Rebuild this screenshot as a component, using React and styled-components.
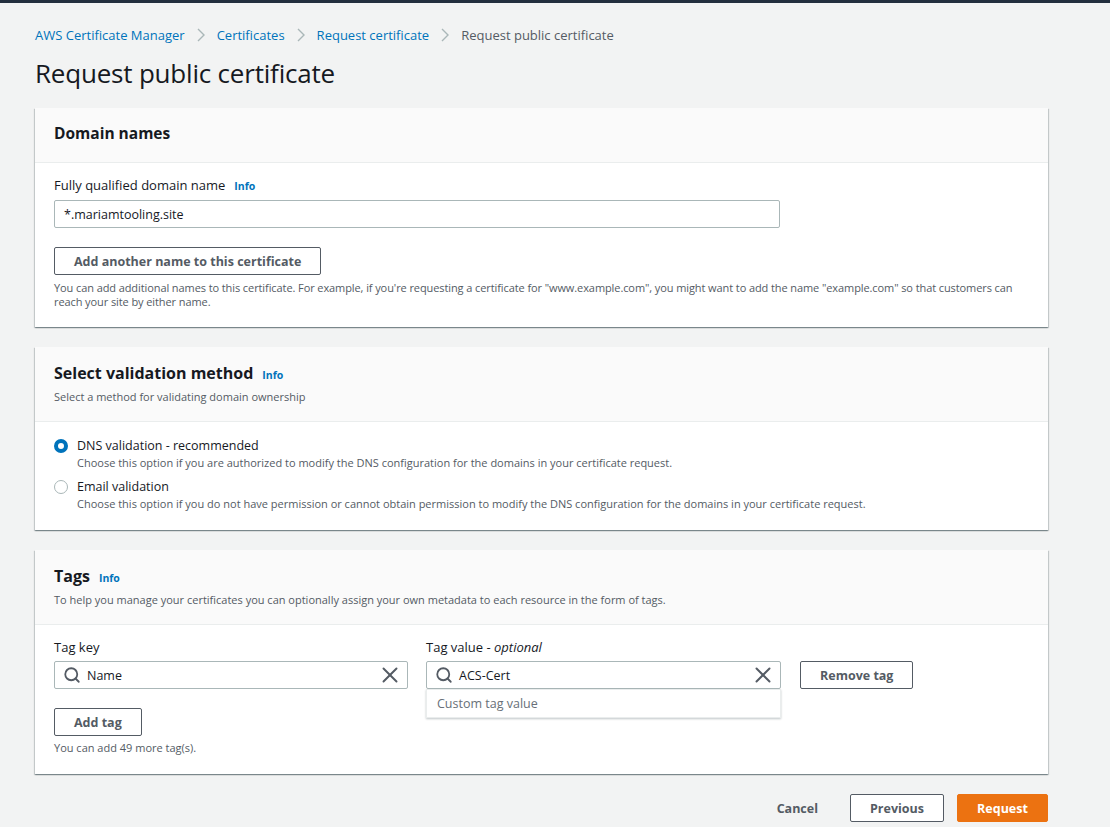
import * as React from 'react'
import styled, { createGlobalStyle } from 'styled-components'
import { Search, X } from 'lucide-react'

const GlobalStyle = createGlobalStyle`
  body {
    margin: 0;
    background: #f2f3f3;
    font-family: "Open Sans", "Noto Sans", Arial, sans-serif;
    color: #16191f;
  }
`

const TopBar = styled.div`
  height: 3px;
  background: #232f3e;
`

const Page = styled.main`
  width: 1013px;
  margin-left: 35px;
  padding-top: 21px;
`

const Crumbs = styled.nav`
  display: flex;
  align-items: center;
  gap: 12px;
  font-size: 13px;
  height: 22px;
`

const Crumb = styled.span`
  color: ${(p) => (p.current ? '#545b64' : '#0073bb')};
`

const Chevron = styled.span`
  display: flex;
  align-items: center;
`

const Title = styled.h1`
  margin: 10px 0 18px;
  font-size: 26px;
  font-weight: 400;
  line-height: 34px;
  letter-spacing: -0.2px;
`

const Card = styled.section`
  background: #fff;
  margin-bottom: 20px;
  box-shadow: 0 1px 1px 0 rgba(0, 28, 36, 0.3), 1px 1px 1px 0 rgba(0, 28, 36, 0.15),
    -1px 1px 1px 0 rgba(0, 28, 36, 0.15);
`

const CardHeader = styled.header`
  background: #fafafa;
  border-bottom: 1px solid #eaeded;
  padding: ${(p) => (p.desc ? '15px 19px 16px' : '14px 19px 18px')};
`

const CardTitle = styled.h2`
  margin: 0;
  font-size: ${(p) => (p.large ? '16px' : '15.5px')};
  font-weight: 700;
  line-height: 22px;
  display: flex;
  align-items: baseline;
  gap: 9px;
`

const Info = styled.span`
  color: #0073bb;
  font-size: 10.5px;
  font-weight: 700;
`

const HeaderDesc = styled.p`
  margin: 3px 0 0;
  font-size: 11px;
  color: #545b64;
  line-height: 16px;
`

const CardBody = styled.div`
  padding: ${(p) => p.pad || '13px 19px 19px'};
`

const Label = styled.div`
  font-size: 13px;
  line-height: 18px;
  display: flex;
  align-items: baseline;
  gap: 9px;
  margin-bottom: 5px;
  em {
    font-style: italic;
  }
`

const TextInput = styled.div`
  width: ${(p) => p.width || '726px'};
  height: 28px;
  box-sizing: border-box;
  border: 1px solid #aab7b8;
  border-radius: 2px;
  display: flex;
  align-items: center;
  padding: ${(p) => (p.search ? '0 4px 0 8px' : '0 9px')};
  gap: 6px;
  font-size: 12.5px;
  color: #16191f;
  background: #fff;
`

const InputText = styled.span`
  flex: 1;
`

const Button = styled.button`
  font-family: inherit;
  font-size: 12.5px;
  font-weight: 700;
  color: #545b64;
  background: ${(p) => (p.primary ? '#ec7211' : '#fff')};
  border: 1px solid ${(p) => (p.primary ? '#ec7211' : '#545b64')};
  border-radius: 2px;
  height: 28px;
  padding: 0 19px;
  ${(p) => p.primary && 'color: #fff;'}
  ${(p) => p.width && `width: ${p.width};`}
`

const LinkButton = styled.button`
  font-family: inherit;
  font-size: 12.5px;
  font-weight: 700;
  color: #545b64;
  background: none;
  border: none;
  padding: 0 19px;
  height: 28px;
`

const Help = styled.p`
  margin: ${(p) => p.m || '6px 0 0'};
  font-size: 11px;
  line-height: 14px;
  color: #545b64;
  letter-spacing: ${(p) => p.tight || '0'};
`

const Spacer = styled.div`
  height: ${(p) => p.h}px;
`

const RadioRow = styled.label`
  display: flex;
  gap: 9px;
  & + & {
    margin-top: 8px;
  }
`

const RadioDot = styled.span`
  width: 14px;
  height: 14px;
  box-sizing: border-box;
  border-radius: 50%;
  margin-top: 2px;
  flex-shrink: 0;
  border: ${(p) => (p.checked ? '4px solid #0073bb' : '1px solid #aab7b8')};
  background: #fff;
`

const RadioText = styled.div`
  display: flex;
  flex-direction: column;
`

const RadioLabel = styled.span`
  font-size: 12.5px;
  line-height: 18px;
`

const RadioDesc = styled.span`
  font-size: 11px;
  line-height: 15px;
  color: #545b64;
`

const TagGrid = styled.div`
  display: flex;
  gap: 18px;
  align-items: flex-start;
`

const TagField = styled.div`
  display: flex;
  flex-direction: column;
  position: relative;
`

const Dropdown = styled.div`
  position: absolute;
  top: 51px;
  left: 0;
  width: 355px;
  height: 29px;
  box-sizing: border-box;
  background: #fff;
  border: 1px solid #eaeded;
  box-shadow: 0 1px 2px rgba(0, 28, 36, 0.25);
  font-size: 12.5px;
  color: #687078;
  padding: 5px 10px;
`

const RemoveWrap = styled.div`
  padding-top: 23px;
  margin-left: 1px;
`

const Footer = styled.footer`
  display: flex;
  justify-content: flex-end;
  align-items: center;
  gap: 13px;
`

const SearchIcon = styled(Search)`
  color: #545b64;
  flex-shrink: 0;
`

const ClearIcon = styled(X)`
  color: #545b64;
  flex-shrink: 0;
`

const Chev = () => (
  <Chevron>
    <svg width="8" height="14" viewBox="0 0 8 14">
      <path d="M1 1l6 6-6 6" fill="none" stroke="#aab7b8" strokeWidth="1.4" />
    </svg>
  </Chevron>
)

export default function App() {
  return (
    <>
      <GlobalStyle />
      <TopBar />
      <Page>
        <Crumbs>
          <Crumb>AWS Certificate Manager</Crumb>
          <Chev />
          <Crumb>Certificates</Crumb>
          <Chev />
          <Crumb>Request certificate</Crumb>
          <Chev />
          <Crumb current>Request public certificate</Crumb>
        </Crumbs>

        <Title>Request public certificate</Title>

        <Card>
          <CardHeader>
            <CardTitle>Domain names</CardTitle>
          </CardHeader>
          <CardBody pad="13px 19px 18px">
            <Label>
              Fully qualified domain name <Info>Info</Info>
            </Label>
            <TextInput>
              <InputText>*.mariamtooling.site</InputText>
            </TextInput>
            <Spacer h={19} />
            <Button>Add another name to this certificate</Button>
            <Help tight="-0.09px">
              You can add additional names to this certificate. For example, if you're requesting a
              certificate for "www.example.com", you might want to add the name "example.com" so that
              customers can reach your site by either name.
            </Help>
          </CardBody>
        </Card>

        <Card>
          <CardHeader desc>
            <CardTitle large>
              Select validation method <Info>Info</Info>
            </CardTitle>
            <HeaderDesc>Select a method for validating domain ownership</HeaderDesc>
          </CardHeader>
          <CardBody pad="15px 19px 19px">
            <RadioRow>
              <RadioDot checked />
              <RadioText>
                <RadioLabel>DNS validation - recommended</RadioLabel>
                <RadioDesc>
                  Choose this option if you are authorized to modify the DNS configuration for the
                  domains in your certificate request.
                </RadioDesc>
              </RadioText>
            </RadioRow>
            <RadioRow>
              <RadioDot />
              <RadioText>
                <RadioLabel>Email validation</RadioLabel>
                <RadioDesc>
                  Choose this option if you do not have permission or cannot obtain permission to
                  modify the DNS configuration for the domains in your certificate request.
                </RadioDesc>
              </RadioText>
            </RadioRow>
          </CardBody>
        </Card>

        <Card>
          <CardHeader desc>
            <CardTitle large>
              Tags <Info>Info</Info>
            </CardTitle>
            <HeaderDesc>
              To help you manage your certificates you can optionally assign your own metadata to
              each resource in the form of tags.
            </HeaderDesc>
          </CardHeader>
          <CardBody pad="13px 19px 19px">
            <TagGrid>
              <TagField>
                <Label>Tag key</Label>
                <TextInput width="354px" search>
                  <SearchIcon size={18} strokeWidth={2.4} />
                  <InputText>Name</InputText>
                  <ClearIcon size={26} strokeWidth={1.8} />
                </TextInput>
              </TagField>
              <TagField>
                <Label>
                  <span>
                    Tag value - <em>optional</em>
                  </span>
                </Label>
                <TextInput width="355px" search>
                  <SearchIcon size={18} strokeWidth={2.4} />
                  <InputText>ACS-Cert</InputText>
                  <ClearIcon size={26} strokeWidth={1.8} />
                </TextInput>
                <Dropdown>Custom tag value</Dropdown>
              </TagField>
              <RemoveWrap>
                <Button>Remove tag</Button>
              </RemoveWrap>
            </TagGrid>
            <Spacer h={19} />
            <Button>Add tag</Button>
            <Help m="5px 0 0">You can add 49 more tag(s).</Help>
          </CardBody>
        </Card>

        <Footer>
          <LinkButton>Cancel</LinkButton>
          <Button width="94px">Previous</Button>
          <Button primary width="91px">
            Request
          </Button>
        </Footer>
      </Page>
    </>
  )
}
